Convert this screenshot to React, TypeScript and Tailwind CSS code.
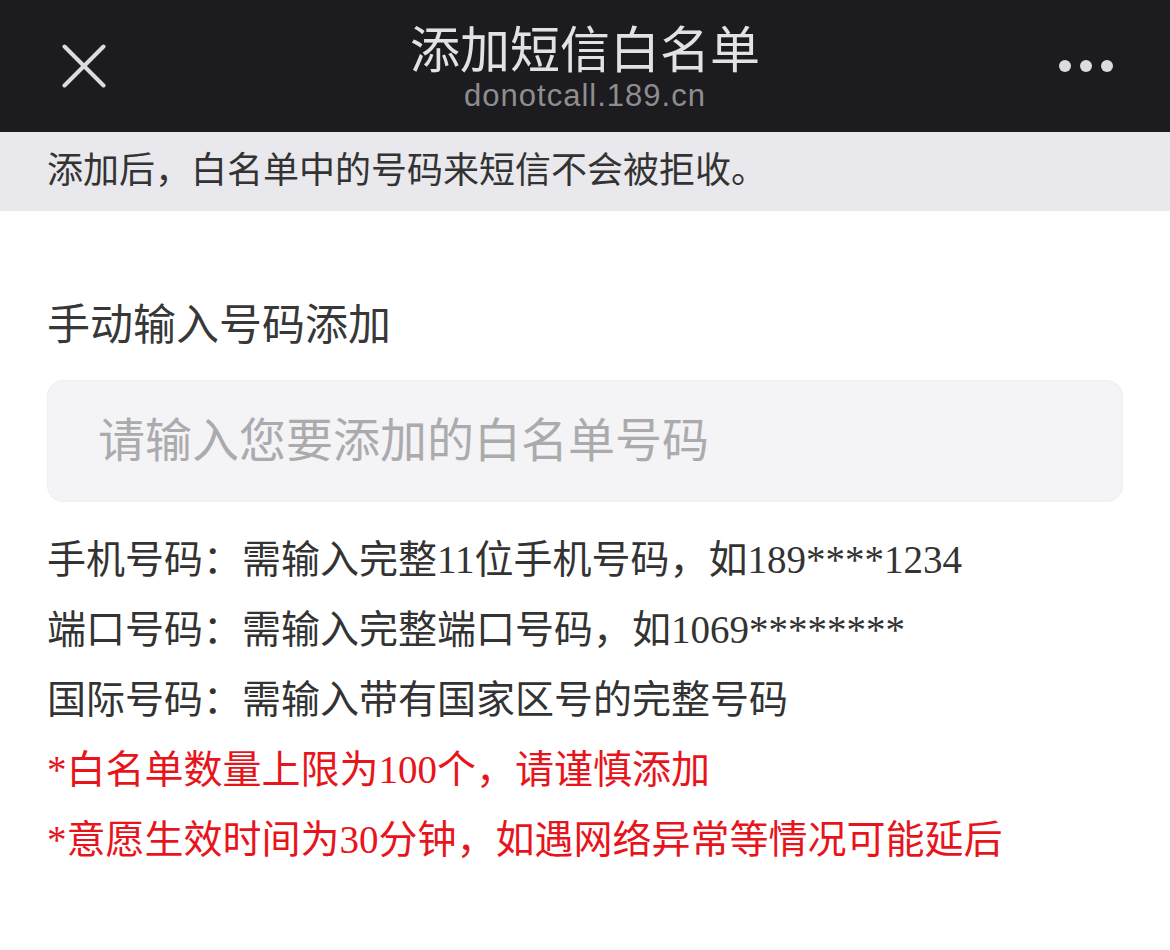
import React from "react";

const cjk = { fontFamily: '"Noto Sans CJK SC", "Noto Sans", sans-serif' };

export default function App() {
  return (
    <div className="min-h-[950px] w-full bg-white" style={cjk}>
      {/* Header */}
      <header className="grid h-[132px] grid-cols-[1fr_auto_1fr] bg-[#1c1b1f]">
        <div className="pl-[62px] pt-[44px]">
          <svg width="44" height="44" viewBox="0 0 44 44" fill="none">
            <path d="M2.5 2.5 L41.5 41.5 M41.5 2.5 L2.5 41.5" stroke="#dcdcdc" strokeWidth="4" strokeLinecap="round" />
          </svg>
        </div>
        <div className="flex flex-col items-center pt-[21px]">
          <div className="text-[50px] leading-[50px] text-[#e2e2e2]">添加短信白名单</div>
          <div
            className="mt-[8px] text-[31px] leading-[34px] tracking-[1px] text-[#8e8e8e]"
            style={{ fontFamily: '"Liberation Sans", Arial, sans-serif' }}
          >
            donotcall.189.cn
          </div>
        </div>
        <div className="flex justify-end gap-[9px] pr-[57px] pt-[60px]">
          <span className="h-[12px] w-[12px] rounded-full bg-[#dcdcdc]" />
          <span className="h-[12px] w-[12px] rounded-full bg-[#dcdcdc]" />
          <span className="h-[12px] w-[12px] rounded-full bg-[#dcdcdc]" />
        </div>
      </header>

      {/* Notice banner */}
      <div className="h-[79px] bg-[#e9e8ec] px-[47px] pt-[17px]">
        <p className="text-[36px] leading-[36px] text-[#333333]">添加后，白名单中的号码来短信不会被拒收。</p>
      </div>

      {/* Body */}
      <main className="px-[47px]">
        <h2 className="mt-[86px] text-[43px] font-normal leading-[48px] text-[#383838]">手动输入号码添加</h2>

        <div className="mt-[35px] h-[122px] rounded-[16px] border border-[#efeef2] bg-[#f4f3f6]">
          <input
            type="text"
            placeholder="请输入您要添加的白名单号码"
            className="h-full w-full bg-transparent pb-[9px] pl-[50px] text-[47px] text-[#333] outline-none placeholder:text-[#ababad]"
            style={cjk}
          />
        </div>

        <div
          className="mt-[23px] text-[39px] leading-[70px] text-[#333333]"
          style={{ fontFamily: '"Liberation Serif", "Noto Sans CJK SC", serif' }}
        >
          <p>手机号码：需输入完整11位手机号码，如189****1234</p>
          <p>端口号码：需输入完整端口号码，如1069********</p>
          <p>国际号码：需输入带有国家区号的完整号码</p>
          <p className="text-[#e8141b]">*白名单数量上限为100个，请谨慎添加</p>
          <p className="text-[#e8141b]">*意愿生效时间为30分钟，如遇网络异常等情况可能延后</p>
        </div>
      </main>
    </div>
  );
}
